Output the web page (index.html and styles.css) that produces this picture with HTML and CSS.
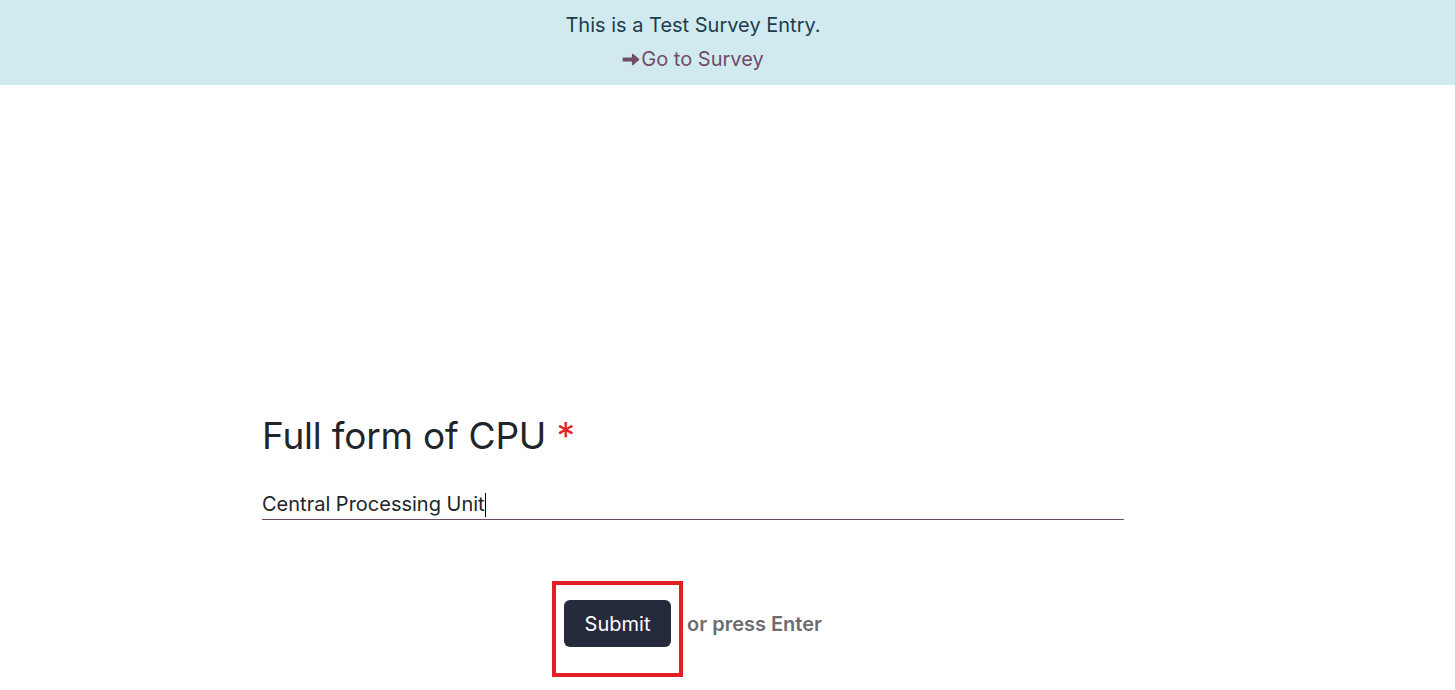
FILE: index.html
```html
<!DOCTYPE html>
<html>
<head>
<meta charset="utf-8">
<link rel="stylesheet" href="styles.css">
</head>
<body>
<div class="banner">
  <div class="banner-inner">
    <p class="banner-text">This is a Test Survey Entry.</p>
    <a class="banner-link" href="#"><svg class="arrow" width="18" height="13" viewBox="0 0 18 13"><path d="M1.2 5.1h9.3V1.3l6.3 5.2-6.3 5.2V7.9H1.2z" fill="#714b67" stroke="#714b67" stroke-width="1.2" stroke-linejoin="round"/></svg>Go to Survey</a>
  </div>
</div>
<main class="page">
  <section class="question">
    <h2 class="q-title">Full form of CPU <span class="req">*</span></h2>
    <div class="answer">
      <span class="answer-text">Central Processing Unit</span><span class="caret"></span>
    </div>
    <div class="actions">
      <div class="submit-wrap">
        <button class="submit">Submit</button>
      </div>
      <span class="hint">or press Enter</span>
    </div>
  </section>
</main>
</body>
</html>
```
FILE: styles.css
```css
html, body {
  margin: 0;
  padding: 0;
  background: #ffffff;
  font-family: Inter, "Noto Sans", sans-serif;
  color: #212529;
}
body {
  min-height: 690px;
}
.banner {
  background: #d1eaf0;
  height: 85px;
  padding-right: 69px;
  box-sizing: border-box;
}
.banner-inner {
  display: flex;
  flex-direction: column;
  align-items: center;
  padding-top: 11px;
}
.banner-text {
  margin: 0;
  font-size: 20px;
  line-height: 28px;
  color: #1c3d4c;
}
.banner-link {
  margin-top: 6px;
  font-size: 20px;
  line-height: 28px;
  color: #714b67;
  text-decoration: none;
  display: flex;
  align-items: center;
}
.arrow {
  display: block;
  margin-right: 1px;
  margin-top: 1px;
}
.page {
  padding: 0 331px 0 262px;
}
.question {
  padding-top: 328px;
  padding-bottom: 43px;
}
.q-title {
  margin: 0;
  font-size: 37px;
  font-weight: 400;
  line-height: 46px;
  color: #212529;
  letter-spacing: -0.2px;
}
.req {
  color: #e02424;
}
.answer {
  margin-top: 30px;
  border-bottom: 1px solid #714b67;
  height: 30px;
  display: flex;
  align-items: flex-start;
  font-size: 20px;
  line-height: 30px;
  color: #212529;
}
.caret {
  display: inline-block;
  width: 1px;
  height: 24px;
  margin-top: 4px;
  background: #000;
}
.actions {
  display: flex;
  align-items: center;
  justify-content: center;
  margin-top: 80px;
  gap: 16px;
}
.submit-wrap {
  position: relative;
}
.submit-wrap::after {
  content: "";
  position: absolute;
  top: -19px;
  left: -12px;
  right: -12px;
  bottom: -30px;
  border: 4px solid #e31e24;
  pointer-events: none;
}
.submit {
  display: block;
  background: #262a3d;
  color: #ffffff;
  border: none;
  border-radius: 6px;
  width: 107px;
  height: 47px;
  font-family: Inter, "Noto Sans", sans-serif;
  font-size: 20px;
  padding: 0;
}
.hint {
  font-size: 20px;
  font-weight: 600;
  color: #6b6d70;
}
```
